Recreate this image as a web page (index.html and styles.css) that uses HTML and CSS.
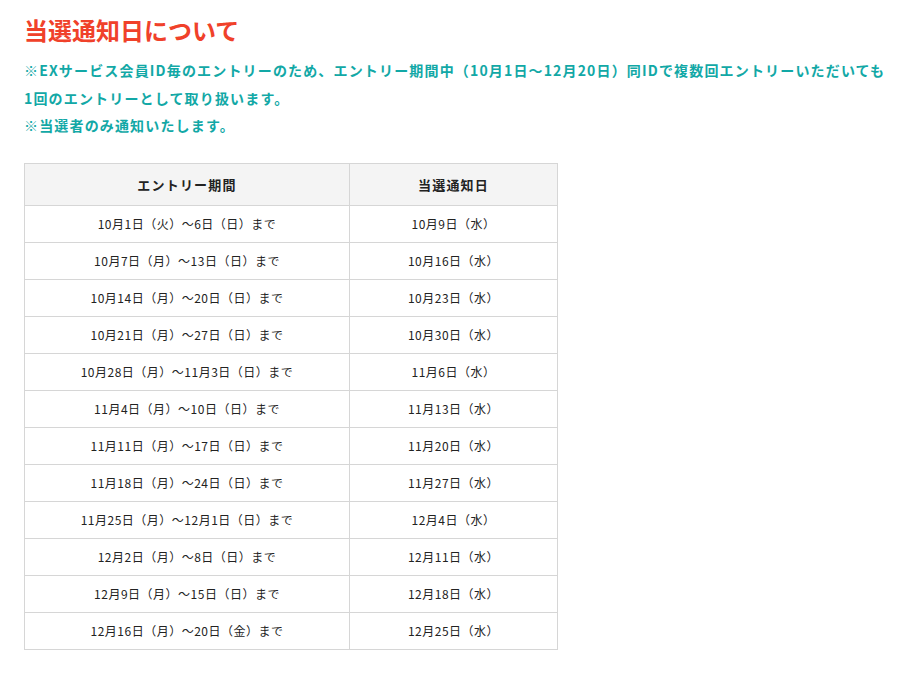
FILE: index.html
```html
<!DOCTYPE html>
<html lang="ja">
<head>
<meta charset="utf-8">
<link rel="stylesheet" href="styles.css">
</head>
<body>
<div class="page">
  <h2 class="title">当選通知日について</h2>
  <p class="note">※EXサービス会員ID毎のエントリーのため、エントリー期間中（10月1日～12月20日）同IDで複数回エントリーいただいても<br>1回のエントリーとして取り扱います。<br>※当選者のみ通知いたします。</p>
  <table class="sched">
    <thead>
      <tr><th class="c1">エントリー期間</th><th>当選通知日</th></tr>
    </thead>
    <tbody>
      <tr><td>10月1日（火）～6日（日）まで</td><td>10月9日（水）</td></tr>
      <tr><td>10月7日（月）～13日（日）まで</td><td>10月16日（水）</td></tr>
      <tr><td>10月14日（月）～20日（日）まで</td><td>10月23日（水）</td></tr>
      <tr><td>10月21日（月）～27日（日）まで</td><td>10月30日（水）</td></tr>
      <tr><td>10月28日（月）～11月3日（日）まで</td><td>11月6日（水）</td></tr>
      <tr><td>11月4日（月）～10日（日）まで</td><td>11月13日（水）</td></tr>
      <tr><td>11月11日（月）～17日（日）まで</td><td>11月20日（水）</td></tr>
      <tr><td>11月18日（月）～24日（日）まで</td><td>11月27日（水）</td></tr>
      <tr><td>11月25日（月）～12月1日（日）まで</td><td>12月4日（水）</td></tr>
      <tr><td>12月2日（月）～8日（日）まで</td><td>12月11日（水）</td></tr>
      <tr><td>12月9日（月）～15日（日）まで</td><td>12月18日（水）</td></tr>
      <tr><td>12月16日（月）～20日（金）まで</td><td>12月25日（水）</td></tr>
    </tbody>
  </table>
</div>
</body>
</html>
```

FILE: styles.css
```css
html, body {
  margin: 0;
  padding: 0;
  background: #fff;
}
body {
  font-family: "Noto Sans CJK JP", "Noto Sans", sans-serif;
  color: #222;
}
.page {
  padding: 13px 24px 20px;
}
.title {
  margin: 0;
  font-size: 24px;
  line-height: 34px;
  font-weight: 700;
  color: #f0412a;
}
.note {
  margin: 10px 0 0;
  font-size: 14px;
  line-height: 27.5px;
  font-weight: 700;
  color: #12a8a6;
  letter-spacing: 1.16px;
  white-space: nowrap;
}
.sched {
  margin-top: 23px;
  width: 534px;
  border-collapse: collapse;
  font-size: 12px;
  letter-spacing: 0.5px;
}
.sched th, .sched td {
  border: 1px solid #d6d6d6;
  text-align: center;
  padding: 0;
}
.sched th {
  height: 41px;
  background: #f4f4f4;
  font-size: 13px;
  letter-spacing: 1.2px;
  font-weight: 700;
}
.sched td {
  height: 36px;
}
.sched .c1 {
  width: 324px;
}
```
